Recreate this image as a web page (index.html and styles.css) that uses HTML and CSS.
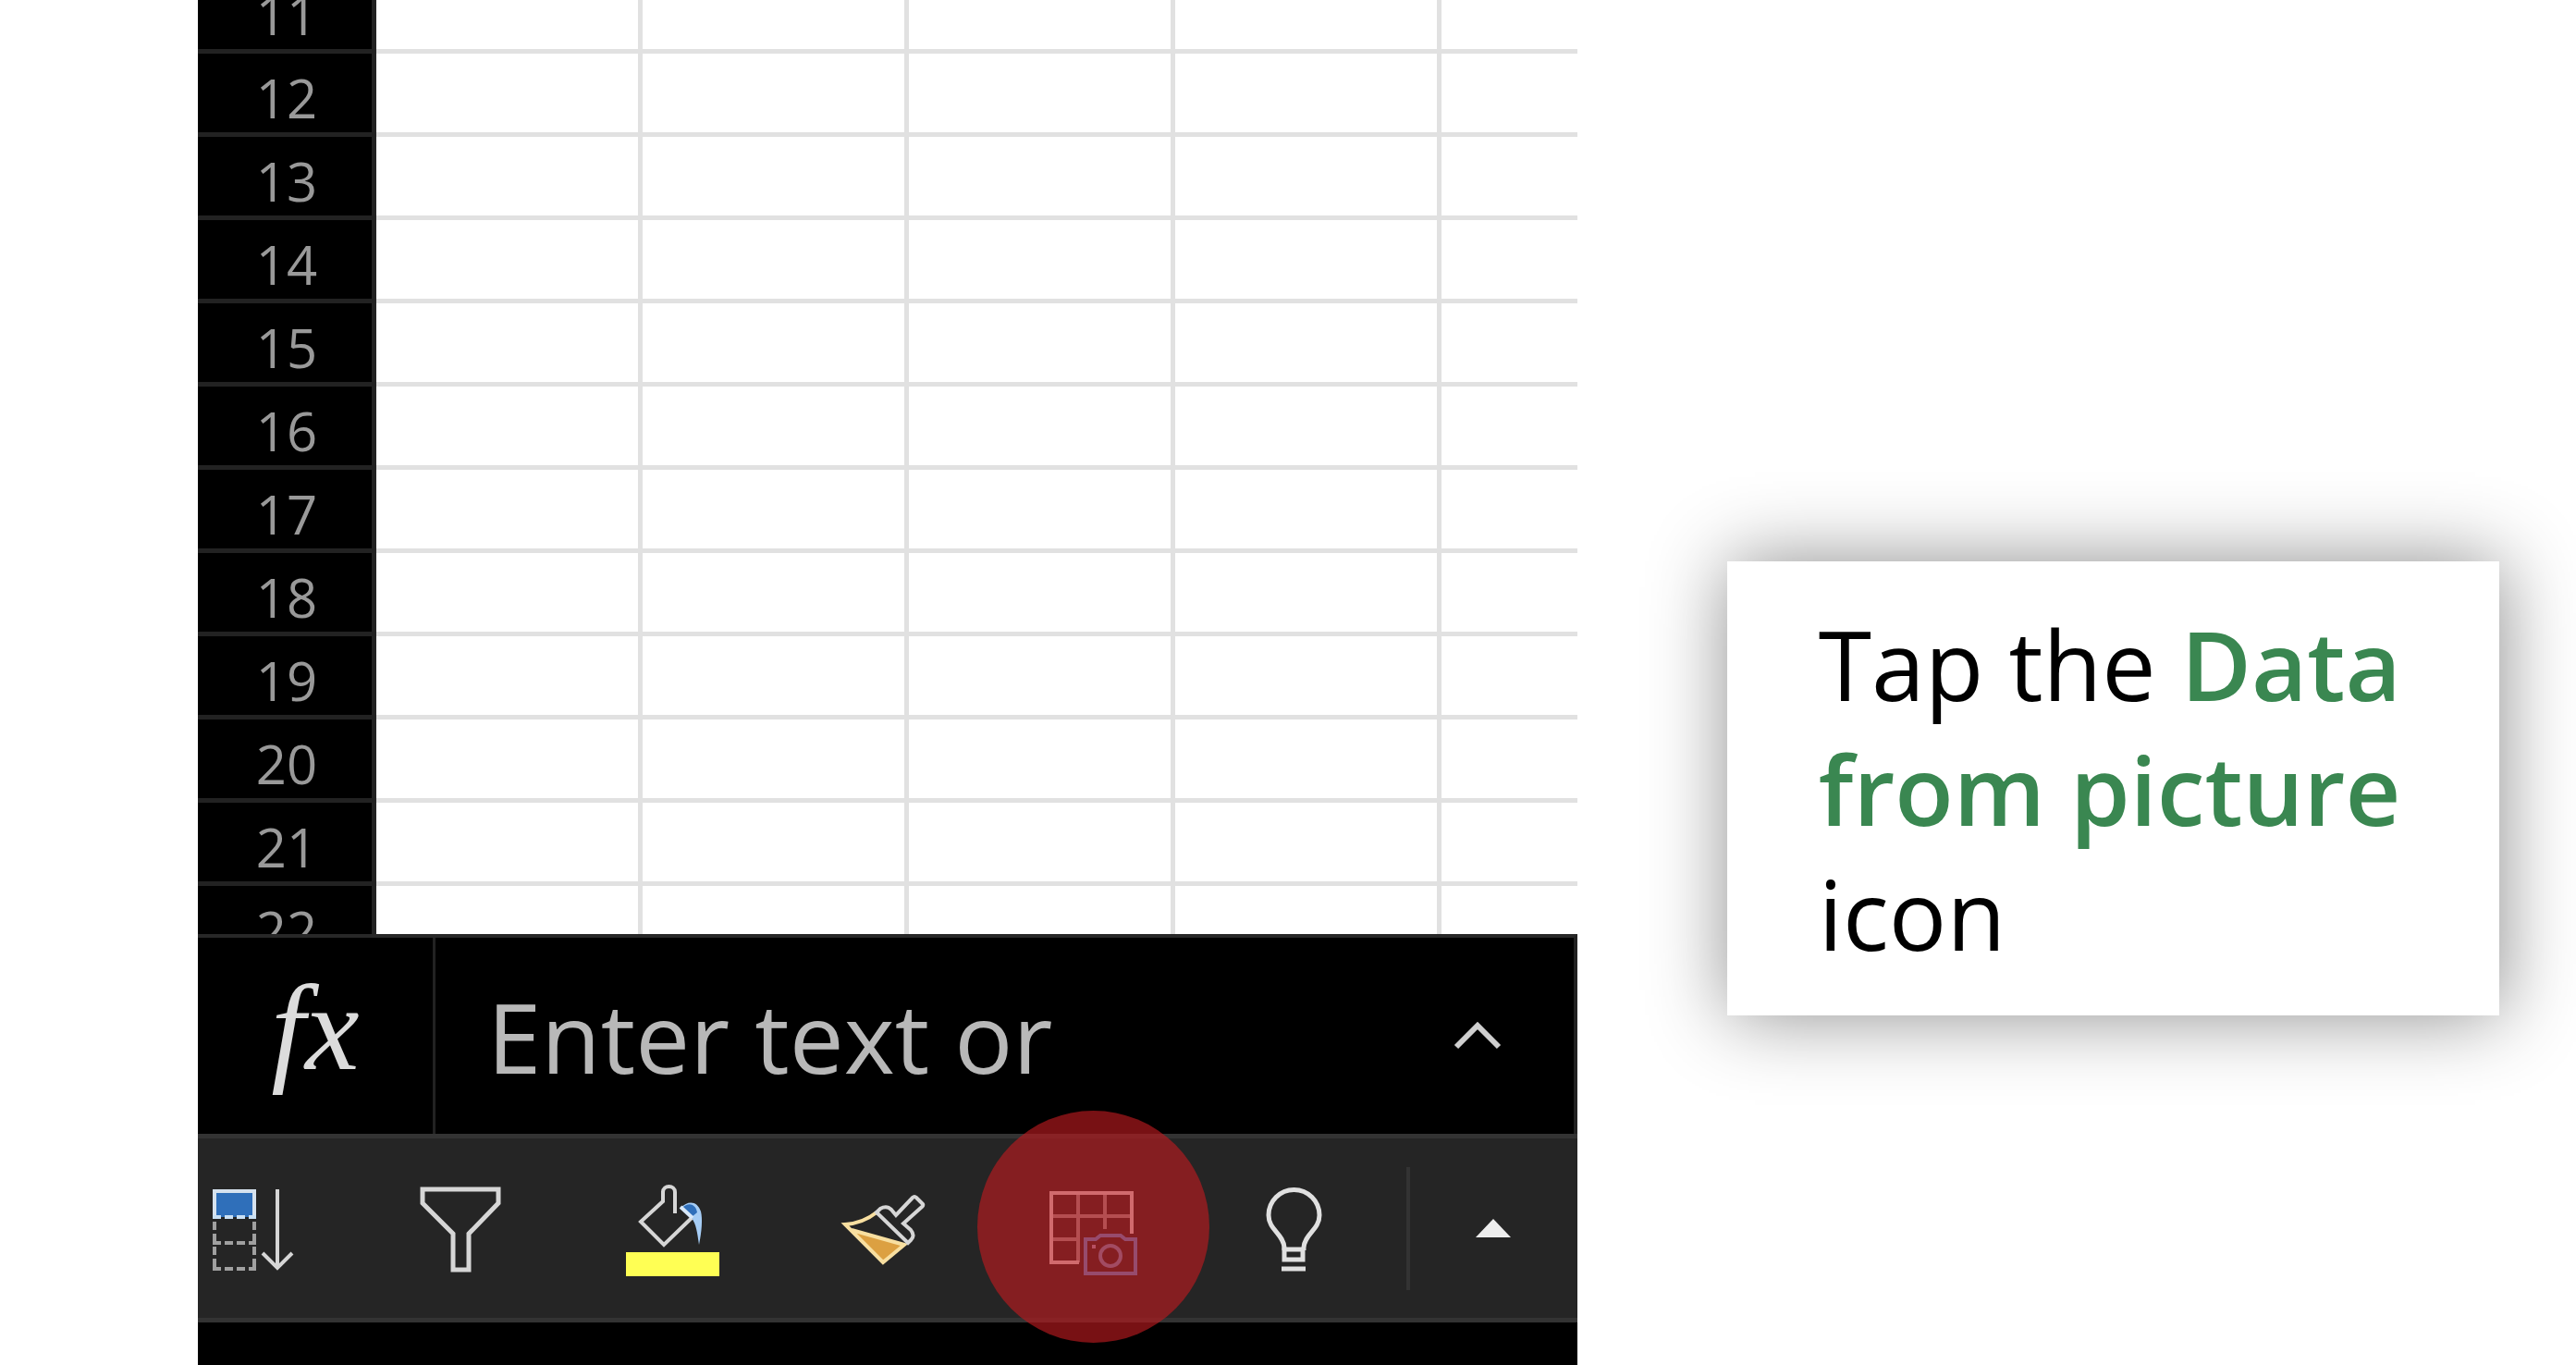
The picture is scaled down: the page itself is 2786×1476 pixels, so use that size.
FILE: index.html
```html
<!DOCTYPE html>
<html lang="en">
<head>
  <meta charset="utf-8">
  <title>Data from picture</title>
  <link rel="stylesheet" href="styles.css">
</head>
<body>
  <main class="slide">
    <section class="phone">
      <div class="sheet">
        <table class="grid">
          <colgroup>
            <col class="col-head">
            <col class="col-cell">
            <col class="col-cell">
            <col class="col-cell">
            <col class="col-cell">
            <col>
          </colgroup>
          <tbody>
            <tr><th scope="row">11</th><td></td><td></td><td></td><td></td><td></td></tr>
            <tr><th scope="row">12</th><td></td><td></td><td></td><td></td><td></td></tr>
            <tr><th scope="row">13</th><td></td><td></td><td></td><td></td><td></td></tr>
            <tr><th scope="row">14</th><td></td><td></td><td></td><td></td><td></td></tr>
            <tr><th scope="row">15</th><td></td><td></td><td></td><td></td><td></td></tr>
            <tr><th scope="row">16</th><td></td><td></td><td></td><td></td><td></td></tr>
            <tr><th scope="row">17</th><td></td><td></td><td></td><td></td><td></td></tr>
            <tr><th scope="row">18</th><td></td><td></td><td></td><td></td><td></td></tr>
            <tr><th scope="row">19</th><td></td><td></td><td></td><td></td><td></td></tr>
            <tr><th scope="row">20</th><td></td><td></td><td></td><td></td><td></td></tr>
            <tr><th scope="row">21</th><td></td><td></td><td></td><td></td><td></td></tr>
            <tr><th scope="row">22</th><td></td><td></td><td></td><td></td><td></td></tr>
          </tbody>
        </table>
      </div>

      <div class="formula">
        <label class="fx" for="formula-input">fx</label>
        <input class="formula-input" id="formula-input" type="text" placeholder="Enter text or">
        <button class="expand" type="button" aria-label="Expand formula bar">
          <svg width="52" height="32" viewBox="0 0 52 32" fill="none" stroke="#cfcfcf" stroke-width="6">
            <path d="M3 28 26 5l23 23"/>
          </svg>
        </button>
      </div>

      <div class="toolbar">
        <div class="tools">
          <button class="tool" type="button" aria-label="Fill down">
            <svg width="104" height="112" viewBox="0 0 104 112" fill="none" stroke-width="4">
              <rect x="11" y="16" width="43" height="28" fill="#2f6fba"/>
              <path d="M11 46V16h43v30" stroke="#d6e2ee"/>
              <path d="M9 44h9m4 0h9m4 0h9m4 0h8" stroke="#c9e0f5"/>
              <path d="M11 49v9m0 4v9M54 49v9m0 4v9M9 72h9m4 0h9m4 0h9m4 0h8M11 76v9m0 4v11M54 76v9m0 4v11M9 100h9m4 0h9m4 0h9m4 0h8" stroke="#a0a0a0"/>
              <path d="M79 14v84M63 83l16 16 16-16" stroke="#d6d6d6"/>
            </svg>
          </button>
          <button class="tool" type="button" aria-label="Filter">
            <svg width="104" height="112" viewBox="0 0 104 112" fill="none" stroke="#d6d6d6" stroke-width="5">
              <path d="M8 14h82v15L58 62v39H41V62L8 29z"/>
            </svg>
          </button>
          <button class="tool" type="button" aria-label="Fill color">
            <svg width="104" height="112" viewBox="0 0 104 112" fill="none" stroke-width="4">
              <path d="M59 34c8-8 18-8 22 4 2 8 1 22-2 36-2-14-3-22-8-29z" fill="#a6cdf5"/>
              <path d="M61 34c6-6 14-5 16 5l-6 5z" fill="#2f6fba"/>
              <path d="M40 16v11L16 49l25 25 30-29" stroke="#d6d6d6"/>
              <path d="M40 17c0-8 13-8 13 0v23" stroke="#d6d6d6"/>
              <path d="M59 33l13 12" stroke="#d8e8f8"/>
              <path d="M0 82h101v26H0z" fill="#ffff54"/>
            </svg>
          </button>
          <button class="tool" type="button" aria-label="Format painter">
            <svg width="104" height="112" viewBox="0 0 104 112" fill="none" stroke-width="4">
              <path d="M16 58l57 16-23 19z" fill="#dca041"/>
              <path d="M43 39c-10 8-20 12-34 13l41 41 23-19-57-16" stroke="#f8dfa0"/>
              <path d="M43 39l4-4q7-4 12 1l5 6 18-19q2-2 4 0l7 7q1 1-1 3L72 51l8 7q5 6 0 11l-3 3z" stroke="#d6d6d6"/>
            </svg>
          </button>
          <button class="tool tool-active" type="button" aria-label="Data from picture">
            <svg width="104" height="112" viewBox="0 0 104 112" fill="none" stroke-width="4">
              <path d="M33 18v75M62 18v39M4 43h87M4 68h29" stroke="#b0b0b0"/>
              <path d="M91 62V18H4v75h30" stroke="#fff"/>
              <path d="M41 68h11l5-4h22l5 4h11v37H41z" stroke="#5aa5ff"/>
              <circle cx="68" cy="86" r="11" stroke="#78a5e0"/>
              <path d="M48 76h4" stroke="#b4b4e0"/>
            </svg>
          </button>
          <button class="tool" type="button" aria-label="Ideas">
            <svg width="104" height="112" viewBox="0 0 104 112" fill="none" stroke="#e0e0e0" stroke-width="5">
              <path d="M28 80v-3C27 62 11 58 11 42a27 27 0 0 1 55 0c0 16-16 20-17 35v3"/>
              <path d="M28 79h20v11H28zM25 100h26"/>
            </svg>
          </button>
        </div>
        <button class="more" type="button" aria-label="More commands">
          <svg width="38" height="20" viewBox="0 0 38 20"><path d="M19 0l19 20H0z" fill="#eee"/></svg>
        </button>
      </div>
    </section>

    <aside class="side">
      <p class="callout">Tap the <strong>Data from picture</strong> icon</p>
    </aside>
  </main>
</body>
</html>
```
FILE: styles.css
```css
* {
  box-sizing: border-box;
}

body {
  margin: 0;
  background: #fff;
  font-family: "Open Sans", "Noto Sans", sans-serif;
}

button {
  padding: 0;
  border: 0;
  background: none;
}

svg {
  display: block;
}

.slide {
  display: grid;
  grid-template-columns: 58fr 42fr;
  height: 100vh;
  padding-left: 214px;
  overflow: hidden;
}

.phone {
  display: flex;
  flex-direction: column;
  min-width: 0;
  min-height: 0;
  padding-bottom: 46px;
  background: #000;
}

/* spreadsheet */
.sheet {
  flex: 1;
  min-height: 0;
  overflow: hidden;
  background: #fff;
}

.grid {
  width: 100%;
  margin-top: -32px;
  table-layout: fixed;
  border-collapse: separate;
  border-spacing: 0;
}

.col-head {
  width: 193px;
}

.col-cell {
  width: 288px;
}

.grid th,
.grid td {
  height: 90px;
  padding: 0;
  border-bottom: 5px solid #e1e1e1;
}

.grid td {
  border-right: 5px solid #e1e1e1;
}

.grid td:last-child {
  border-right: 0;
}

.grid th {
  padding: 11px 0 0 4px;
  border-right: 5px solid #222;
  border-bottom-color: #222;
  background: #000;
  color: #999;
  font-size: 58px;
  font-weight: 400;
  line-height: 60px;
}

/* formula bar */
.formula {
  display: flex;
  height: 216px;
  border-top: 4px solid #282828;
  border-right: 4px solid #222;
}

.fx {
  flex: none;
  width: 257px;
  padding-top: 18px;
  border-right: 3px solid #222;
  color: #dcdcdc;
  font-family: "Liberation Serif", serif;
  font-size: 132px;
  font-style: italic;
  line-height: 160px;
  text-align: center;
}

.formula-input {
  flex: 1;
  min-width: 0;
  padding: 0 0 0 56px;
  border: 0;
  outline: 0;
  background: none;
  color: #b8b8b8;
  font-family: inherit;
  font-size: 105px;
}

.formula-input::placeholder {
  color: #b8b8b8;
  opacity: 1;
}

.expand {
  display: flex;
  flex: none;
  align-items: center;
  justify-content: center;
  width: 208px;
}

/* toolbar */
.toolbar {
  display: flex;
  align-items: center;
  justify-content: space-between;
  height: 204px;
  padding-left: 7px;
  border-top: 5px solid #333;
  border-bottom: 5px solid #333;
  background: #252525;
}

.tools {
  display: flex;
  gap: 124px;
}

.tool {
  flex: none;
}

.tool-active {
  position: relative;
}

.tool-active::after {
  content: "";
  position: absolute;
  top: 50%;
  left: 50%;
  width: 251px;
  height: 251px;
  margin: -127px 0 0 -128px;
  border-radius: 50%;
  background: rgba(185, 26, 31, 0.65);
}

.more {
  display: flex;
  flex: none;
  align-items: center;
  justify-content: center;
  width: 185px;
  height: 133px;
  border-left: 4px solid #333;
}

/* callout */
.side {
  padding: 607px 83px 0 162px;
}

.callout {
  margin: 0;
  padding: 43px 80px 43px 99px;
  background: #fff;
  box-shadow: 2px 0 80px rgba(0, 0, 0, 0.45);
  color: #000;
  font-size: 104px;
  line-height: 135px;
}

.callout strong {
  color: #3a8751;
  font-weight: 600;
}
```
